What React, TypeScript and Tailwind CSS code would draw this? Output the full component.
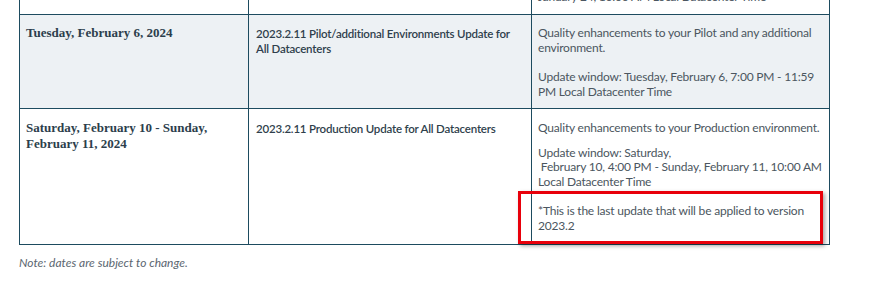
import React from "react";

const sans = { fontFamily: "Lato, 'Open Sans', sans-serif" } as React.CSSProperties;

export default function App() {
  return (
    <div className="w-[880px] h-[292px] bg-white overflow-hidden pl-[19px]" style={sans}>
      <table className="border-collapse w-[811px] table-fixed">
        <colgroup>
          <col className="w-[229px]" />
          <col className="w-[283px]" />
          <col className="w-[298px]" />
        </colgroup>
        <tbody>
          <tr>
            <td className="border border-[#1d4b5f] border-t-0 p-0"><div className="h-[14px]" /></td>
            <td className="border border-[#1d4b5f] border-t-0 p-0"><div className="h-[14px]" /></td>
            <td className="border border-[#1d4b5f] border-t-0 p-0">
              <div className="h-[14px] overflow-hidden pl-[6px]">
                <div className="mt-[-10px] text-[12px] tracking-[-0.2px] leading-[14.5px] text-[#4b5660]">January 24, 10:00 AM Local Datacenter Time</div>
              </div>
            </td>
          </tr>
          <tr className="bg-[#edf1f4]">
            <td className="border border-[#1d4b5f] align-top px-[6px] pt-[10px] h-[94px]">
              <div className="font-['Liberation_Serif',serif] font-bold text-[13px] leading-[16px] text-[#2c3e4c]">Tuesday, February 6, 2024</div>
            </td>
            <td className="border border-[#1d4b5f] align-top pl-[7px] pr-[14px] pt-[11px]">
              <div className="font-semibold text-[11.5px] tracking-[-0.2px] leading-[15px] text-[#2f3f4c]">2023.2.11 Pilot/additional Environments Update for All Datacenters</div>
            </td>
            <td className="border border-[#1d4b5f] align-top pl-[6px] pr-[4px] pt-[11px] text-[12px] tracking-[-0.2px] leading-[14.5px] text-[#4b5660]">
              <p>Quality enhancements to your Pilot and any additional environment.</p>
              <p className="mt-[15px]">Update window: Tuesday, February 6, 7:00 PM - 11:59 PM Local Datacenter Time</p>
            </td>
          </tr>
          <tr>
            <td className="border border-[#1d4b5f] align-top px-[6px] pt-[11px] h-[136px]">
              <div className="font-['Liberation_Serif',serif] font-bold text-[13px] leading-[16px] text-[#2c3e4c]">Saturday, February 10 - Sunday, February 11, 2024</div>
            </td>
            <td className="border border-[#1d4b5f] align-top pl-[7px] pr-[14px] pt-[12px]">
              <div className="font-semibold text-[11.5px] tracking-[-0.2px] leading-[15px] text-[#2f3f4c]">2023.2.11 Production Update for All Datacenters</div>
            </td>
            <td className="border border-[#1d4b5f] align-top pl-[6px] pr-[4px] pt-[12px] pb-[10px] text-[12px] tracking-[-0.2px] leading-[14.5px] text-[#4b5660]">
              <p>Quality enhancements to your Production environment.</p>
              <p className="mt-[10px]">Update window: Saturday,<br />&nbsp;February 10, 4:00 PM - Sunday, February 11, 10:00 AM<br />Local Datacenter Time</p>
              <div className="relative mt-[15px] pr-[14px]">
                <p>*This is the last update that will be applied to version 2023.2</p>
                <div className="absolute left-[-20px] right-[2px] top-[-13px] bottom-[-11px] border-[3px] border-[#e8000b] shadow-[2px_2px_4px_rgba(0,0,0,0.35)] pointer-events-none" />
              </div>
            </td>
          </tr>
        </tbody>
      </table>
      <div className="mt-[9px] text-[12px] italic text-[#5b6670]">Note: dates are subject to change.</div>
    </div>
  );
}
